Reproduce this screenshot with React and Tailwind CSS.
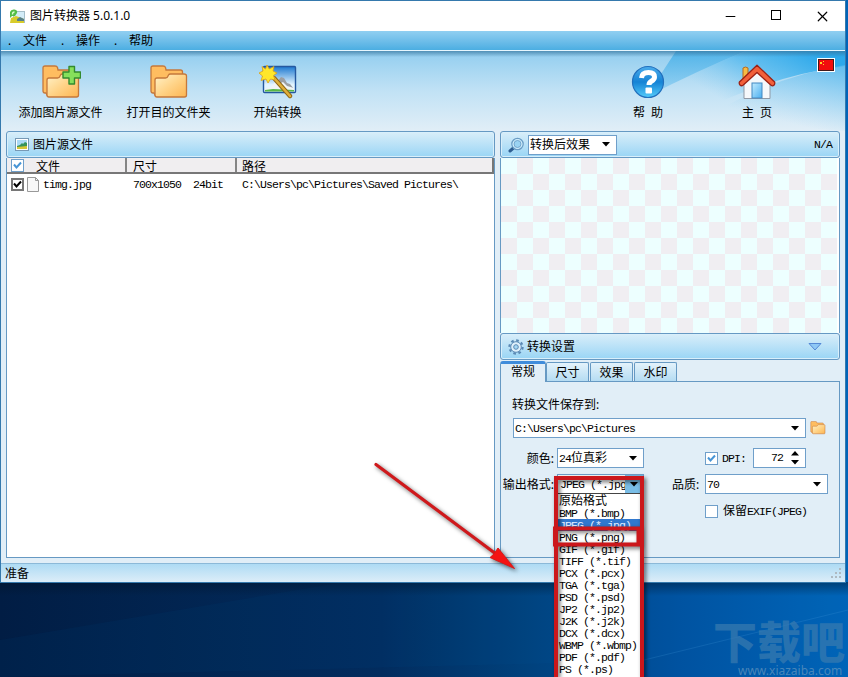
import { Minus, Square, X } from "lucide-react"

const FORMATS = [
  "BMP (*.bmp)",
  "JPEG (*.jpg)",
  "PNG (*.png)",
  "GIF (*.gif)",
  "TIFF (*.tif)",
  "PCX (*.pcx)",
  "TGA (*.tga)",
  "PSD (*.psd)",
  "JP2 (*.jp2)",
  "J2K (*.j2k)",
  "DCX (*.dcx)",
  "WBMP (*.wbmp)",
  "PDF (*.pdf)",
  "PS (*.ps)",
]

// fixed pitch latin text, 6px per character
const Mono = ({ children }) => (
  <span className="font-['Liberation_Mono',monospace] text-[11.5px] tracking-[-0.9px] whitespace-pre">
    {children}
  </span>
)

const Caret = () => (
  <svg width="8" height="5" viewBox="0 0 8 5" className="shrink-0">
    <path d="M0 0h8L4 4.6z" fill="#000" />
  </svg>
)

const Select = ({ className, children }) => (
  <div className={`flex h-5 items-center justify-between border border-[#6f9fca] bg-white pr-1.5 pl-px ${className}`}>
    <span className="whitespace-nowrap">{children}</span>
    <Caret />
  </div>
)

const Checkbox = ({ checked }) => (
  <div className="h-[13px] w-[13px] shrink-0 border border-[#6f9fca] bg-white">
    {checked && (
      <svg width="11" height="11" viewBox="0 0 11 11">
        <path d="M2 4.5l2.5 3L9 2.5" fill="none" stroke="#4795d6" strokeWidth="2" />
      </svg>
    )}
  </div>
)

const Folder = ({ size = 40, plus }) => (
  <svg width={size} height={size * 0.85} viewBox="0 0 40 34">
    <defs>
      <linearGradient id="fold" x1="0" y1="0" x2="1" y2="1">
        <stop offset="0" stopColor="#fff3cb" />
        <stop offset="0.5" stopColor="#ffd489" />
        <stop offset="1" stopColor="#fdb551" />
      </linearGradient>
    </defs>
    <path
      d="M2 3q0-2 2-2h10q2 0 2.500 1.500L17 5h14.500q2 0 2 2v23H6l-1-2H4q-2 0-2-2z"
      fill="#ffbd60"
      stroke="#c5783b"
      strokeWidth="1.300"
    />
    <path
      d="M6 15q0-2 2-2h8.500q2 0 2.500-2l.5-1q.5-1 2-1H35q2.500 0 2.500 2v19q0 2-2 2H8q-2 0-2-2z"
      fill="url(#fold)"
      stroke="#c5783b"
      strokeWidth="1.300"
    />
    {plus && (
      <path
        d="M28 1.500h5.500v5.500h6v6h-6v6H28v-6h-6V7h6z"
        fill="#86e05b"
        stroke="#338a2f"
        strokeWidth="1.400"
        strokeLinejoin="round"
      />
    )}
  </svg>
)

const WandIcon = () => (
  <svg width="40" height="34" viewBox="0 0 40 34">
    <defs>
      <linearGradient id="sky" x1="0" y1="0" x2="0" y2="1">
        <stop offset="0" stopColor="#1c78d0" />
        <stop offset="0.7" stopColor="#e4f5ff" />
      </linearGradient>
    </defs>
    <rect x="5.500" y="1.500" width="32" height="26" rx="1" fill="url(#sky)" stroke="#2458a0" strokeWidth="1.400" />
    <path d="M13 23l4-4 6-7 3 1 3 5 3 1 4 5z" fill="#9b9fa4" />
    <path d="M7 24l6-2 6-7 2 4 4-2 4 4 7 2v3H7z" fill="#f1f4f5" />
    <path d="M7 25l8-1 21 1v1.500H7z" fill="#57b848" />
    <path d="M16 13l16 18" stroke="#8e6412" strokeWidth="4.400" strokeLinecap="round" />
    <path d="M16 13l16 18" stroke="#dfaf3a" strokeWidth="2.600" strokeLinecap="round" />
    <path
      d="M9 0l2.200 4L16 1.500l-1 4.500 4 2-3.500 2.500L17 15l-4.500-1L10 18l-2-4-5 1.500 1.500-4.500L1 8l4-2-1-4.500L7.500 4z"
      fill="#ffe72b"
      stroke="#dc9f17"
      strokeWidth="0.800"
    />
  </svg>
)

const HelpIcon = () => (
  <svg width="34" height="34" viewBox="0 0 34 34">
    <defs>
      <linearGradient id="ball" x1="0" y1="0" x2="0" y2="1">
        <stop offset="0" stopColor="#4caceb" />
        <stop offset="0.5" stopColor="#1583d5" />
        <stop offset="1" stopColor="#53cbfa" />
      </linearGradient>
    </defs>
    <circle cx="17" cy="17" r="15.500" fill="url(#ball)" stroke="#2270bd" strokeWidth="1.200" />
    <path d="M10.500 13q.3-5.500 7-5.500 6 0 6 4.500 0 2.500-3.200 4.300-2.300 1.300-2.300 3.700" fill="none" stroke="#fff" strokeWidth="5" />
    <rect x="14.500" y="22.500" width="6.500" height="6" rx="1" fill="#fff" />
  </svg>
)

const HomeIcon = () => (
  <svg width="38" height="36" viewBox="0 0 38 36">
    <defs>
      <linearGradient id="door" x1="0" y1="0" x2="1" y2="1">
        <stop offset="0" stopColor="#c1ebff" />
        <stop offset="1" stopColor="#4baff0" />
      </linearGradient>
    </defs>
    <path d="M5 4q2.500-2 5 0v11H5z" fill="#f7bb44" stroke="#b36b23" />
    <path d="M6 20L19 8l13 12v14.500H6z" fill="#f5f8fb" stroke="#9099a5" />
    <rect x="14" y="19" width="10" height="15" fill="url(#door)" stroke="#4388c2" />
    <path
      d="M19 1.200L36.600 18q.6 1.500-.5 3-1.500 1.500-3 .3L19 8.500 5 21.300q-1.700 1-3-.3-1.200-1.500-.6-3z"
      fill="#f2603a"
      stroke="#9c2014"
      strokeWidth="1.300"
      strokeLinejoin="round"
    />
  </svg>
)

const PictureIcon = () => (
  <svg width="14" height="13" viewBox="0 0 14 13">
    <rect x="0.500" y="0.500" width="13" height="12" fill="#fff" stroke="#7799b5" />
    <rect x="2" y="2" width="10" height="9" fill="#a9d9f5" />
    <path d="M2 8l3-1 2-2 1 1 2-2 2 1v4H2z" fill="#36935a" />
    <path d="M2 9l10-1v3H2z" fill="#d6c636" />
  </svg>
)

const AppIcon = () => (
  <svg width="16" height="15" viewBox="0 0 16 15">
    <rect x="4.500" y="2.500" width="11" height="11" fill="#d3ecf8" stroke="#a5bec9" />
    <path d="M2 9l5-2 8 3v4H1z" fill="#d8cc2b" />
    <path d="M8 10l3-2 4 2v2H8z" fill="#577f89" />
    <path d="M1 9V3q1-3 4.500-2.500Q9 1 8 4L6 7H3z" fill="#54bd48" />
    <path d="M3.500 5.500q0-2.500 2-2.500" stroke="#e0ffd5" strokeWidth="1.400" fill="none" />
  </svg>
)

const LensIcon = () => (
  <svg width="17" height="16" viewBox="0 0 17 16">
    <path d="M2 14l4-3.500" stroke="#2f5f92" strokeWidth="3" strokeLinecap="round" />
    <circle cx="9.500" cy="7" r="5.700" fill="#a9daf4" stroke="#6b9cc4" strokeWidth="1.200" />
    <circle cx="9.500" cy="7" r="4.300" fill="#9ad3f2" stroke="#e1f5ff" strokeWidth="1" />
    <circle cx="9.500" cy="7" r="3.500" fill="none" stroke="#6b9cc4" strokeWidth="0.800" />
  </svg>
)

const GearIcon = () => (
  <svg width="16" height="16" viewBox="0 0 16 16">
    <circle cx="8" cy="8" r="6.600" fill="none" stroke="#5a89b4" strokeWidth="2.200" strokeDasharray="2.600 2.580" />
    <circle cx="8" cy="8" r="5.300" fill="#dff0fb" stroke="#5a89b4" />
    <circle cx="8" cy="8" r="2.300" fill="#a6d8f4" stroke="#5a89b4" />
  </svg>
)

const ToolButton = ({ icon, label, className }) => (
  <div className={`flex flex-col items-center ${className}`}>
    <div className="flex h-9 items-center">{icon}</div>
    <span className="mt-[5px] leading-4 whitespace-pre">{label}</span>
  </div>
)

const PanelHeader = ({ className, children }) => (
  <div
    className={`flex shrink-0 items-center rounded-[3px] border border-[#6699c3] bg-gradient-to-b from-[#d9eef9] to-[#99d5f5] shadow-[inset_0_0_0_1px_#d8effb] ${className}`}
  >
    {children}
  </div>
)

const Toolbar = () => (
  <div className="relative flex h-20 shrink-0 bg-gradient-to-b from-[#91cdef] via-[#c1e2f5] to-[#e1eef7]">
    <svg className="absolute inset-0" width="844" height="80" viewBox="0 0 844 80">
      <defs>
        <linearGradient id="edge" x1="0" y1="0" x2="0" y2="1">
          <stop offset="0" stopColor="#36749c" stopOpacity="0.7" />
          <stop offset="1" stopColor="#36749c" stopOpacity="0" />
        </linearGradient>
        <linearGradient id="ray" x1="0" y1="0" x2="0" y2="1">
          <stop offset="0" stopColor="#3cabe6" stopOpacity="0.75" />
          <stop offset="1" stopColor="#5dbbee" stopOpacity="0.35" />
        </linearGradient>
        <linearGradient id="sweep" gradientUnits="userSpaceOnUse" x1="810" y1="0" x2="765" y2="75">
          <stop offset="0" stopColor="#27a6ea" stopOpacity="0.95" />
          <stop offset="0.5" stopColor="#3fb2ee" stopOpacity="0.6" />
          <stop offset="1" stopColor="#7ec9f1" stopOpacity="0" />
        </linearGradient>
        <linearGradient id="base" gradientUnits="userSpaceOnUse" x1="820" y1="0" x2="800" y2="75">
          <stop offset="0" stopColor="#4cb5ee" stopOpacity="0.9" />
          <stop offset="1" stopColor="#8accf0" stopOpacity="0" />
        </linearGradient>
      </defs>
      <path d="M675 0Q662 20 645 46Q700 18 745 0z" fill="url(#ray)" />
      <path d="M745 0Q700 18 645 46L700 60Q770 25 844 15V0z" fill="url(#sweep)" />
      <path d="M700 70Q765 27 844 14V80z" fill="url(#base)" />
      <rect width="844" height="6" fill="url(#edge)" />
    </svg>
    <div className="relative flex flex-1 pt-[13px]">
      <ToolButton className="ml-4 w-[87px]" icon={<Folder plus />} label="添加图片源文件" />
      <ToolButton className="ml-5 w-[89px]" icon={<Folder />} label="打开目的文件夹" />
      <ToolButton className="ml-10 w-[49px]" icon={<WandIcon />} label="开始转换" />
      <div className="flex-1" />
      <ToolButton className="mr-[67px] w-[42px]" icon={<HelpIcon />} label={"帮  助"} />
      <ToolButton className="mr-[67px] w-[42px]" icon={<HomeIcon />} label={"主  页"} />
    </div>
    <svg width="18" height="14" viewBox="0 0 18 14" className="absolute top-[7px] right-[10px]">
      <rect x="0.500" y="0.500" width="17" height="13" fill="#f20d0d" stroke="#fff" />
      <rect x="1.500" y="1.500" width="15" height="11" fill="none" stroke="#431a1a" />
      <path d="M3 4h2v2H3zM6 3h1v1H6zM6 6h1v1H6z" fill="#ffd82a" />
    </svg>
  </div>
)

const FileList = () => (
  <div className="flex w-[489px] flex-col">
    <PanelHeader className="h-[27px] pl-2">
      <PictureIcon />
      <span className="ml-1">图片源文件</span>
    </PanelHeader>
    <div className="flex-1 border border-t-0 border-[#6699c3] bg-white">
      <div className="flex h-4 border-r-2 border-b-2 border-[#777] bg-[#f0eef0]">
        <div className="flex w-[120px] items-center border-r-2 border-[#858585] pl-1">
          <Checkbox checked />
          <span className="ml-3 pt-1">文件</span>
        </div>
        <div className="flex w-[110px] items-center border-r-2 border-[#858585] pt-1 pl-1.5">尺寸</div>
        <div className="flex items-center pt-1 pl-[5px]">路径</div>
      </div>
      <div className="flex h-[21px] items-center pl-1">
        <div className="h-[13px] w-[13px] border-2 border-[#777] bg-white">
          <svg width="9" height="9" viewBox="0 0 9 9">
            <path d="M1 3.500l2.500 3L8 1.500" fill="none" stroke="#000" strokeWidth="2" />
          </svg>
        </div>
        <svg width="12" height="15" viewBox="0 0 12 15" className="ml-[3px]">
          <path d="M.5.5h8l3 3v11H.5z" fill="#f8f8f8" stroke="#999" />
          <path d="M8.500.5v3h3" fill="none" stroke="#999" />
        </svg>
        <div className="ml-1 flex w-[90px]"><Mono>timg.jpg</Mono></div>
        <div className="flex w-[109px]"><Mono>{"700x1050  24bit"}</Mono></div>
        <Mono>{"C:\\Users\\pc\\Pictures\\Saved Pictures\\"}</Mono>
      </div>
    </div>
  </div>
)

const FormatSelect = () => (
  <div className="relative h-5 w-[87px] border border-[#6f9fca] bg-white">
    <div className="flex h-full items-center justify-between pl-0.5">
      <div className="flex w-[65px] overflow-hidden pt-0.5 whitespace-nowrap"><Mono>JPEG (*.jpg)</Mono></div>
      <div className="flex h-full w-[18px] items-center justify-center bg-[#79bde6]"><Caret /></div>
    </div>
    <div className="absolute top-[18px] left-0 z-10 h-[184px] w-[84px] border-t border-[#444] bg-white pt-px">
      <div className="h-3 pl-px leading-3">原始格式</div>
      {FORMATS.map((format) => (
        <div
          key={format}
          className={`h-3 overflow-hidden pl-px leading-3 whitespace-nowrap ${format.startsWith("JPEG") ? "bg-[#3178ce] text-[#e5efff]" : ""}`}
        >
          <Mono>{format}</Mono>
        </div>
      ))}
    </div>
  </div>
)

const Tab = ({ children }) => (
  <div className="flex h-[19px] w-[43px] items-center justify-center rounded-t-[2px] border border-b-0 border-[#6699c3] bg-gradient-to-b from-[#e3f2fb] to-[#b5dcf2] pt-px">
    {children}
  </div>
)

const Settings = () => (
  <>
    <div className="mt-px flex h-[21px] items-end gap-px border-b border-[#6699c3]">
      <div className="-mb-px mr-[-1px] flex h-[21px] w-[46px] items-center justify-center rounded-t-[3px] border-x border-t-[3px] border-x-[#6699c3] border-t-[#3f8cdb] bg-[#e1eef7] pb-[3px]">
        常规
      </div>
      <Tab>尺寸</Tab>
      <Tab>效果</Tab>
      <Tab>水印</Tab>
    </div>
    <div className="flex flex-1 flex-col border border-t-0 border-[#6699c3] pt-3.5">
      <div className="pl-[11px] leading-[18px]">转换文件保存到:</div>
      <div className="mt-1 flex items-center pl-3">
        <Select className="w-[293px]"><Mono>{"C:\\Users\\pc\\Pictures"}</Mono></Select>
        <div className="ml-1"><Folder size={16} /></div>
      </div>
      <div className="mt-2.5 flex h-5 items-center">
        <div className="w-14 pt-0.5 pr-[3px] text-right">颜色:</div>
        <Select className="w-[87px]"><Mono>24</Mono>位真彩</Select>
        <div className="ml-[61px] flex items-center">
          <Checkbox checked />
          <span className="ml-1 w-[31px]"><Mono>DPI:</Mono></span>
          <div className="flex h-5 w-[53px] items-center justify-end border border-[#6f9fca] bg-white pr-1.5">
            <Mono>72</Mono>
            <svg width="8" height="14" viewBox="0 0 8 14" className="ml-2">
              <path d="M0 4.500h8L4 0zM0 9h8L4 13.500z" fill="#000" />
            </svg>
          </div>
        </div>
      </div>
      <div className="mt-1.5 flex h-5 items-center">
        <div className="flex w-14 justify-end pt-0.5 pr-[3px] whitespace-nowrap">输出格式:</div>
        <FormatSelect />
        <div className="ml-7 w-[33px] pt-0.5 whitespace-nowrap">品质:</div>
        <Select className="w-[123px]"><Mono>70</Mono></Select>
      </div>
      <div className="mt-[9px] flex items-center pl-[204px]">
        <Checkbox />
        <span className="ml-[5px] leading-4">保留<Mono>EXIF(JPEG)</Mono></span>
      </div>
    </div>
  </>
)

const PreviewPanel = () => (
  <div className="flex w-[340px] flex-col">
    <PanelHeader className="h-[27px] pl-[7px]">
      <LensIcon />
      <Select className="ml-[3px] w-[89px]">转换后效果</Select>
      <span className="ml-auto pr-[7px]"><Mono>N/A</Mono></span>
    </PanelHeader>
    <div className="h-[175px] shrink-0 border-x border-[#6699c3] bg-white pr-0.5">
      <div className="h-full bg-[conic-gradient(#f0eef2_25%,#edffff_0_50%,#f0eef2_0_75%,#edffff_0)] bg-[length:32px_32px]" />
    </div>
    <PanelHeader className="h-[27px] pl-[7px]">
      <GearIcon />
      <span className="ml-[3px]">转换设置</span>
      <svg width="14" height="8" viewBox="0 0 14 8" className="mr-[17px] ml-auto">
        <path d="M1 .5h12L7 7z" fill="#8ec8f5" stroke="#5589d5" />
      </svg>
    </PanelHeader>
    <Settings />
  </div>
)

const Wallpaper = () => (
  <svg className="absolute inset-0" width="848" height="677" viewBox="0 0 848 677">
    <defs>
      <linearGradient id="desk" x1="0" y1="0" x2="1" y2="0">
        <stop offset="0" stopColor="#011d44" />
        <stop offset="0.45" stopColor="#022c5e" />
        <stop offset="0.62" stopColor="#00417c" />
        <stop offset="0.8" stopColor="#0052a0" />
        <stop offset="1" stopColor="#0064b8" />
      </linearGradient>
      <linearGradient id="shade" x1="0" y1="0" x2="0" y2="1">
        <stop offset="0" stopColor="#001326" stopOpacity="0.45" />
        <stop offset="1" stopColor="#001326" stopOpacity="0" />
      </linearGradient>
    </defs>
    <rect width="848" height="677" fill="url(#desk)" />
    <path d="M0 640L345 582H848V610L640 661L0 677z" fill="#0878c8" opacity="0.05" />
    <path d="M640 661L848 610" stroke="#4ba1e0" opacity="0.2" />
    <rect y="582" width="848" height="14" fill="url(#shade)" />
  </svg>
)

const Annotations = () => (
  <svg
    className="absolute inset-0 z-20 drop-shadow-[2px_2px_2px_rgba(0,0,0,0.6)]"
    width="848"
    height="677"
    viewBox="0 0 848 677"
    fill="none"
  >
    <rect x="556" y="478" width="86" height="201" stroke="#cb171b" strokeWidth="4" />
    <rect x="555" y="528.500" width="83.500" height="16" stroke="#cb171b" strokeWidth="4" />
    <path d="M376 464.500L496 554" stroke="#cf191c" strokeWidth="3.200" strokeLinecap="round" />
    <path d="M514.500 568.500L490 557.500l4-3.500 4-6z" fill="#f51313" stroke="#d81a1a" />
  </svg>
)

export default function App() {
  return (
    <div className="relative h-[677px] w-[848px] overflow-hidden font-['Noto_Sans','Noto_Sans_CJK_SC',sans-serif] text-xs text-black">
      <Wallpaper />
      <div className="relative flex h-[583px] w-[846px] flex-col border border-[#3579ad] bg-[#e1eef7]">
        <div className="flex h-[30px] shrink-0 items-center bg-white pl-2">
          <AppIcon />
          <span className="ml-[5px]">图片转换器 5.0.1.0</span>
          <div className="mr-[14px] ml-auto flex items-center gap-[31px]">
            <Minus size={15} strokeWidth={1.1} absoluteStrokeWidth />
            <svg width="14" height="14" viewBox="0 0 14 14">
              <rect x="2.500" y="1.500" width="9" height="9" fill="none" stroke="#000" />
            </svg>
            <X size={17} strokeWidth={1.2} absoluteStrokeWidth />
          </div>
        </div>

        <div className="flex h-5 shrink-0 items-center border-b border-[#e8f7ff] bg-gradient-to-b from-[#91cff1] to-[#4baee2] pt-px pl-[7px]">
          {["文件", "操作", "帮助"].map((item) => (
            <div key={item} className="flex w-[53px] items-center">
              <span className="w-[15px]">.</span>
              <span>{item}</span>
            </div>
          ))}
        </div>

        <Toolbar />

        <div className="flex min-h-0 flex-1 justify-between pr-[5px] pb-[5px] pl-[5px]">
          <FileList />
          <PreviewPanel />
        </div>

        <div className="flex h-[19px] shrink-0 items-center justify-between border-t border-[#8cb9d8] bg-gradient-to-b from-[#aedbf4] to-[#dcedf8] pr-[3px] pl-1">
          <span className="pt-0.5">准备</span>
          <svg width="12" height="12" viewBox="0 0 12 12">
            <path d="M9 1h2v2H9zM5 5h2v2H5zM9 5h2v2H9zM1 9h2v2H1zM5 9h2v2H5zM9 9h2v2H9z" fill="#aeb9c1" />
          </svg>
        </div>
      </div>

      {/* watermark */}
      <div className="absolute top-[620px] left-[713px] text-[44px] leading-[44px] font-black whitespace-nowrap text-[#3b7cb0]/70">下载吧</div>
      <div className="absolute top-[664px] left-[738px] text-[12px] leading-[13px] whitespace-nowrap text-[#5b91bd]/80">www.xiazaiba.com</div>

      <Annotations />
    </div>
  )
}
